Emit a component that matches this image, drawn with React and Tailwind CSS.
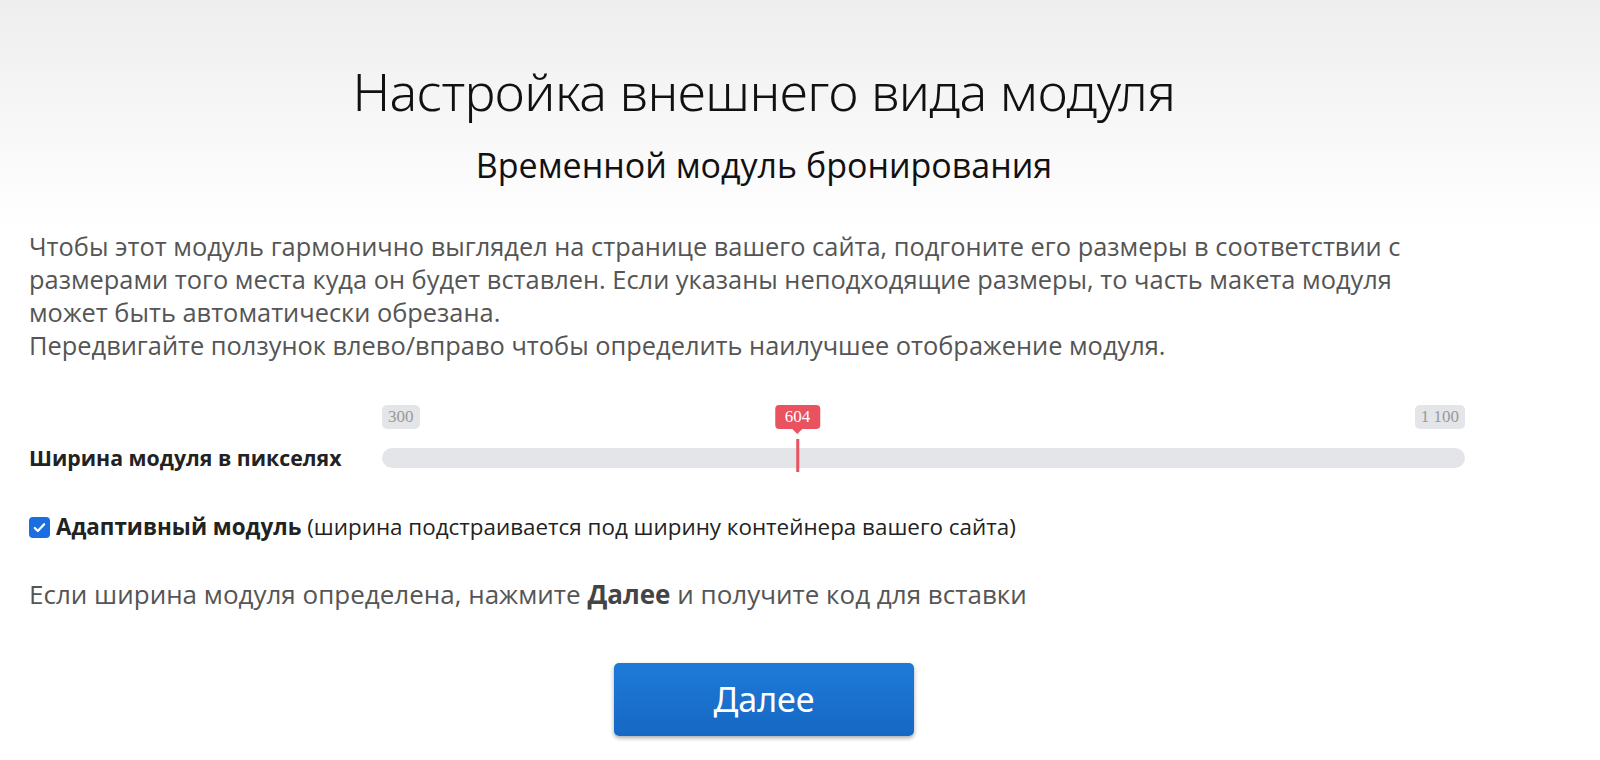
import React from "react";

export default function App() {
  const min = 300, max = 1100, value = 604;
  const pct = ((value - min) / (max - min)) * 100;
  const serif = { fontFamily: '"Liberation Serif", serif' };
  return (
    <div className="w-[1600px] h-[760px] overflow-hidden bg-[linear-gradient(to_bottom,#eeeeee_0px,#ffffff_230px)] text-[#333]" style={{ fontFamily: '"Open Sans", "Noto Sans", sans-serif' }}>
      <div className="w-[1528px]">
        <div className="flex flex-col items-center pt-[56px]">
          <h1 className="text-[52px] leading-[70px] font-light text-[#111] tracking-[-0.5px]" style={{ fontFamily: '"Noto Sans", "Open Sans", sans-serif' }}>
            Настройка внешнего вида модуля
          </h1>
          <h2 className="mt-[19px] text-[34px] leading-[40px] font-normal text-[#111]">
            Временной модуль бронирования
          </h2>
        </div>
        <div className="px-[29px] mt-[45px]">
          <p className="text-[25.4px] leading-[33px] text-[#555]">
            Чтобы этот модуль гармонично выглядел на странице вашего сайта, подгоните его размеры в соответствии с
            <br />
            размерами того места куда он будет вставлен. Если указаны неподходящие размеры, то часть макета модуля
            <br />
            может быть автоматически обрезана.
            <br />
            Передвигайте ползунок влево/вправо чтобы определить наилучшее отображение модуля.
          </p>

          <div className="mt-[38px] flex items-start">
            <div className="w-[353px] shrink-0 mt-[44px] text-[21.3px] leading-[28px] font-bold text-[#222]">
              Ширина модуля в пикселях
            </div>
            <div className="relative w-[1083px] h-[80px]">
              <div className="absolute left-0 top-[5px] h-[24px] px-[6px] rounded-[5px] bg-[#e3e5e9] text-[#999] text-[17px] leading-[24px]" style={serif}>300</div>
              <div className="absolute right-0 top-[5px] h-[24px] px-[6px] rounded-[5px] bg-[#e3e5e9] text-[#999] text-[17px] leading-[24px]" style={serif}>1 100</div>
              <div className="absolute top-[48px] left-0 right-0 h-[20px] rounded-full bg-[#e3e5e9]" />
              <div className="absolute top-[5px] -translate-x-1/2 flex flex-col items-center" style={{ left: `calc(${pct}% + 4px)` }}>
                <div className="h-[24px] px-[10px] rounded-[4px] bg-[#e8535f] text-white text-[17px] leading-[24px]" style={serif}>{value}</div>
                <div className="w-0 h-0 border-l-[5px] border-r-[5px] border-t-[5px] border-l-transparent border-r-transparent border-t-[#e8535f]" />
                <div className="mt-[5px] w-[3px] h-[33px] bg-[#e8535f]" />
              </div>
            </div>
          </div>

          <label className="mt-[32px] flex items-center text-[22.4px] leading-[30px] text-[#222]">
            <span className="w-[21px] h-[21px] rounded-[4px] bg-[#1a6fe0] flex items-center justify-center mr-[6px]">
              <svg viewBox="0 0 16 16" className="w-[15px] h-[15px]" fill="none" stroke="white" strokeWidth="2.4" strokeLinecap="round" strokeLinejoin="round">
                <path d="M3 8.5l3.2 3.2L13 4.5" />
              </svg>
            </span>
            <span className="font-bold">Адаптивный модуль</span>
            <span>&nbsp;(ширина подстраивается под ширину контейнера вашего сайта)</span>
          </label>

          <p className="mt-[36px] text-[26px] leading-[33px] text-[#555]">
            Если ширина модуля определена, нажмите <b className="font-bold text-[#444]">Далее</b> и получите код для вставки
          </p>
        </div>

        <div className="mt-[52px] flex justify-center">
          <button className="w-[300px] h-[73px] rounded-[5px] bg-[linear-gradient(to_bottom,#1e7ad8,#1668c4)] shadow-[0_2px_4px_rgba(0,0,0,0.35)] text-white text-[34px] font-normal" style={{ fontFamily: '"Noto Sans", "Open Sans", sans-serif' }}>
            Далее
          </button>
        </div>
      </div>
    </div>
  );
}
